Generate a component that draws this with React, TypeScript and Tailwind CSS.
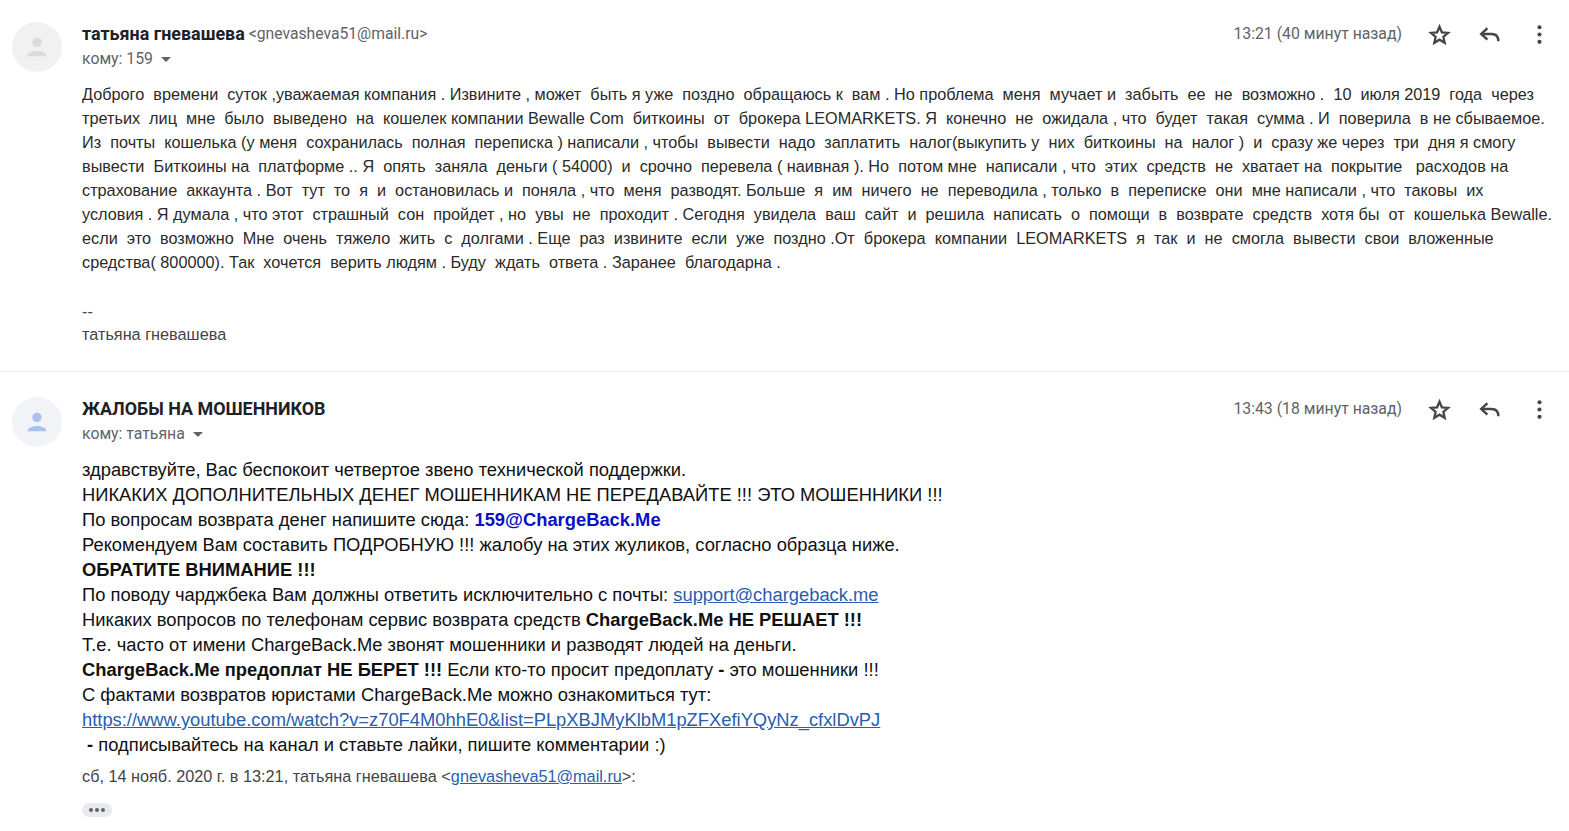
const sans = "font-['Liberation_Sans',Arial,sans-serif]";

const firstBody = [
  "Доброго  времени  суток ,уважаемая компания . Извините , может  быть я уже  поздно  обращаюсь к  вам . Но проблема  меня  мучает и  забыть  ее  не  возможно .  10  июля 2019  года  через",
  "третьих  лиц  мне  было  выведено  на  кошелек компании Bewalle Com  биткоины  от  брокера LEOMARKETS. Я  конечно  не  ожидала , что  будет  такая  сумма . И  поверила  в не сбываемое.",
  "Из  почты  кошелька (у меня  сохранилась  полная  переписка ) написали , чтобы  вывести  надо  заплатить  налог(выкупить у  них  биткоины  на  налог )  и  сразу же через  три  дня я смогу",
  "вывести  Биткоины на  платформе .. Я  опять  заняла  деньги ( 54000)  и  срочно  перевела ( наивная ). Но  потом мне  написали , что  этих  средств  не  хватает на  покрытие   расходов на",
  "страхование  аккаунта . Вот  тут  то  я  и  остановилась и  поняла , что  меня  разводят. Больше  я  им  ничего  не  переводила , только  в  переписке  они  мне написали , что  таковы  их",
  "условия . Я думала , что этот  страшный  сон  пройдет , но  увы  не  проходит . Сегодня  увидела  ваш  сайт  и  решила  написать  о  помощи  в  возврате  средств  хотя бы  от  кошелька Bewalle.",
  "если  это  возможно  Мне  очень  тяжело  жить  с  долгами . Еще  раз  извините  если  уже  поздно .От  брокера  компании  LEOMARKETS  я  так  и  не  смогла  вывести  свои  вложенные",
  "средства( 800000). Так  хочется  верить людям . Буду  ждать  ответа . Заранее  благодарна .",
];

function Person({ color }: { color: string }) {
  return (
    <svg viewBox="0 0 24 24" className="h-[28px] w-[28px]" fill={color}>
      <circle cx="12" cy="8" r="4" />
      <path d="M4 19.5c0-2.7 5.3-4 8-4s8 1.3 8 4V20H4z" />
    </svg>
  );
}

function Header({
  name,
  email,
  to,
  time,
  avatarBg,
  iconColor,
}: {
  name: string;
  email?: string;
  to: string;
  time: string;
  avatarBg: string;
  iconColor: string;
}) {
  return (
    <div className="flex items-start">
      <div className={`ml-[12px] flex h-[50px] w-[50px] shrink-0 items-center justify-center rounded-full ${avatarBg}`}>
        <Person color={iconColor} />
      </div>
      <div className="ml-[20px] flex-1">
        <div className="flex h-[24px] items-center font-['Roboto',sans-serif]">
          <span className="whitespace-pre text-[17.9px] font-bold text-[#202124]">{name}</span>
          {email && <span className="ml-[4px] text-[15.7px] text-[#5f6368]">{email}</span>}
        </div>
        <div className="mt-[1px] flex h-[24px] items-center font-['Roboto',sans-serif] text-[15.8px] text-[#5f6368]">
          <span>{to}</span>
          <span className="ml-[8px] h-0 w-0 border-x-[5px] border-t-[5px] border-x-transparent border-t-[#5f6368]" />
        </div>
      </div>
      <div className="flex h-[24px] items-center pr-[17px] pt-[1px] font-['Roboto',sans-serif] text-[15.8px] text-[#5f6368]">
        <span className="-mt-[2px]">{time}</span>
        <svg viewBox="0 0 24 24" className="ml-[25px] h-[25px] w-[25px]" fill="none" stroke="#444746" strokeWidth="2.2" strokeLinejoin="miter">
          <path d="M12 4.5l2.3 5.4 5.9.5-4.5 3.9 1.3 5.7L12 17l-5 3 1.3-5.7-4.5-3.9 5.9-.5z" />
        </svg>
        <svg viewBox="0 0 24 24" className="ml-[25px] h-[25px] w-[25px]" fill="none" stroke="#444746" strokeWidth="2.3">
          <path d="M10 6l-6 5.5 6 5.5" />
          <path d="M4 11.5h10c4 0 6.5 2.5 6.5 7" />
        </svg>
        <svg viewBox="0 0 24 24" className="ml-[25px] h-[25px] w-[25px]" fill="#444746">
          <circle cx="12" cy="5" r="2" />
          <circle cx="12" cy="12" r="2" />
          <circle cx="12" cy="19" r="2" />
        </svg>
      </div>
    </div>
  );
}

export default function App() {
  return (
    <div className={`h-[831px] w-[1569px] overflow-hidden bg-white ${sans}`}>
      {/* First message */}
      <section className="h-[372px] border-b border-[#efefef] pt-[22px]">
        <Header
          name="татьяна гневашева"
          email="<gnevasheva51@mail.ru>"
          to="кому: 159"
          time="13:21 (40 минут назад)"
          avatarBg="bg-[#f1f1f1]"
          iconColor="#dadada"
        />
        <div className="ml-[82px] mt-[10px] text-[16.25px] leading-[24px] text-[#2a2a2a]">
          {firstBody.map((line) => (
            <div key={line} className="whitespace-pre">
              {line}
            </div>
          ))}
          <div className="mt-[25px] text-[#444]">--</div>
          <div className="-mt-[1px] text-[#444]">татьяна гневашева</div>
        </div>
      </section>

      {/* Second message */}
      <section className="pt-[25px]">
        <Header
          name="ЖАЛОБЫ НА МОШЕННИКОВ"
          to="кому: татьяна"
          time="13:43 (18 минут назад)"
          avatarBg="bg-[#f1f3f7]"
          iconColor="#a8c2ee"
        />
        <div className="ml-[82px] mt-[10px] whitespace-pre text-[18.35px] leading-[25px] text-[#111]">
          <div>здравствуйте, Вас беспокоит четвертое звено технической поддержки.</div>
          <div>НИКАКИХ ДОПОЛНИТЕЛЬНЫХ ДЕНЕГ МОШЕННИКАМ НЕ ПЕРЕДАВАЙТЕ !!! ЭТО МОШЕННИКИ !!!</div>
          <div>
            По вопросам возврата денег напишите сюда: <b className="text-[#0b10c8]">159@ChargeBack.Me</b>
          </div>
          <div>Рекомендуем Вам составить ПОДРОБНУЮ !!! жалобу на этих жуликов, согласно образца ниже.</div>
          <div className="font-bold">ОБРАТИТЕ ВНИМАНИЕ !!!</div>
          <div>
            По поводу чарджбека Вам должны ответить исключительно с почты:{" "}
            <a className="text-[#2a5db0] underline">support@chargeback.me</a>
          </div>
          <div>
            Никаких вопросов по телефонам сервис возврата средств <b>ChargeBack.Me НЕ РЕШАЕТ !!!</b>
          </div>
          <div>Т.е. часто от имени ChargeBack.Me звонят мошенники и разводят людей на деньги.</div>
          <div>
            <b>ChargeBack.Me предоплат НЕ БЕРЕТ !!!</b> Если кто-то просит предоплату <b>-</b> это мошенники !!!
          </div>
          <div>С фактами возвратов юристами ChargeBack.Me можно ознакомиться тут:</div>
          <div>
            <a className="text-[#2a5db0] underline">https://www.youtube.com/watch?v=z70F4M0hhE0&amp;list=PLpXBJMyKlbM1pZFXefiYQyNz_cfxlDvPJ</a>
          </div>
          <div>
            {" "}
            <b>-</b> подписывайтесь на канал и ставьте лайки, пишите комментарии :)
          </div>
        </div>
        <div className="ml-[82px] mt-[7px] h-[24px] text-[16.25px] leading-[24px] text-[#444]">
          сб, 14 нояб. 2020 г. в 13:21, татьяна гневашева &lt;
          <a className="text-[#2a5db0] underline">gnevasheva51@mail.ru</a>&gt;:
        </div>
        <div className="ml-[82px] mt-[15px] flex h-[14px] w-[30px] items-center justify-center gap-[2px] rounded-full bg-[#e8eaed]">
          <span className="h-[4px] w-[4px] rounded-full bg-[#5f6368]" />
          <span className="h-[4px] w-[4px] rounded-full bg-[#5f6368]" />
          <span className="h-[4px] w-[4px] rounded-full bg-[#5f6368]" />
        </div>
      </section>
    </div>
  );
}
